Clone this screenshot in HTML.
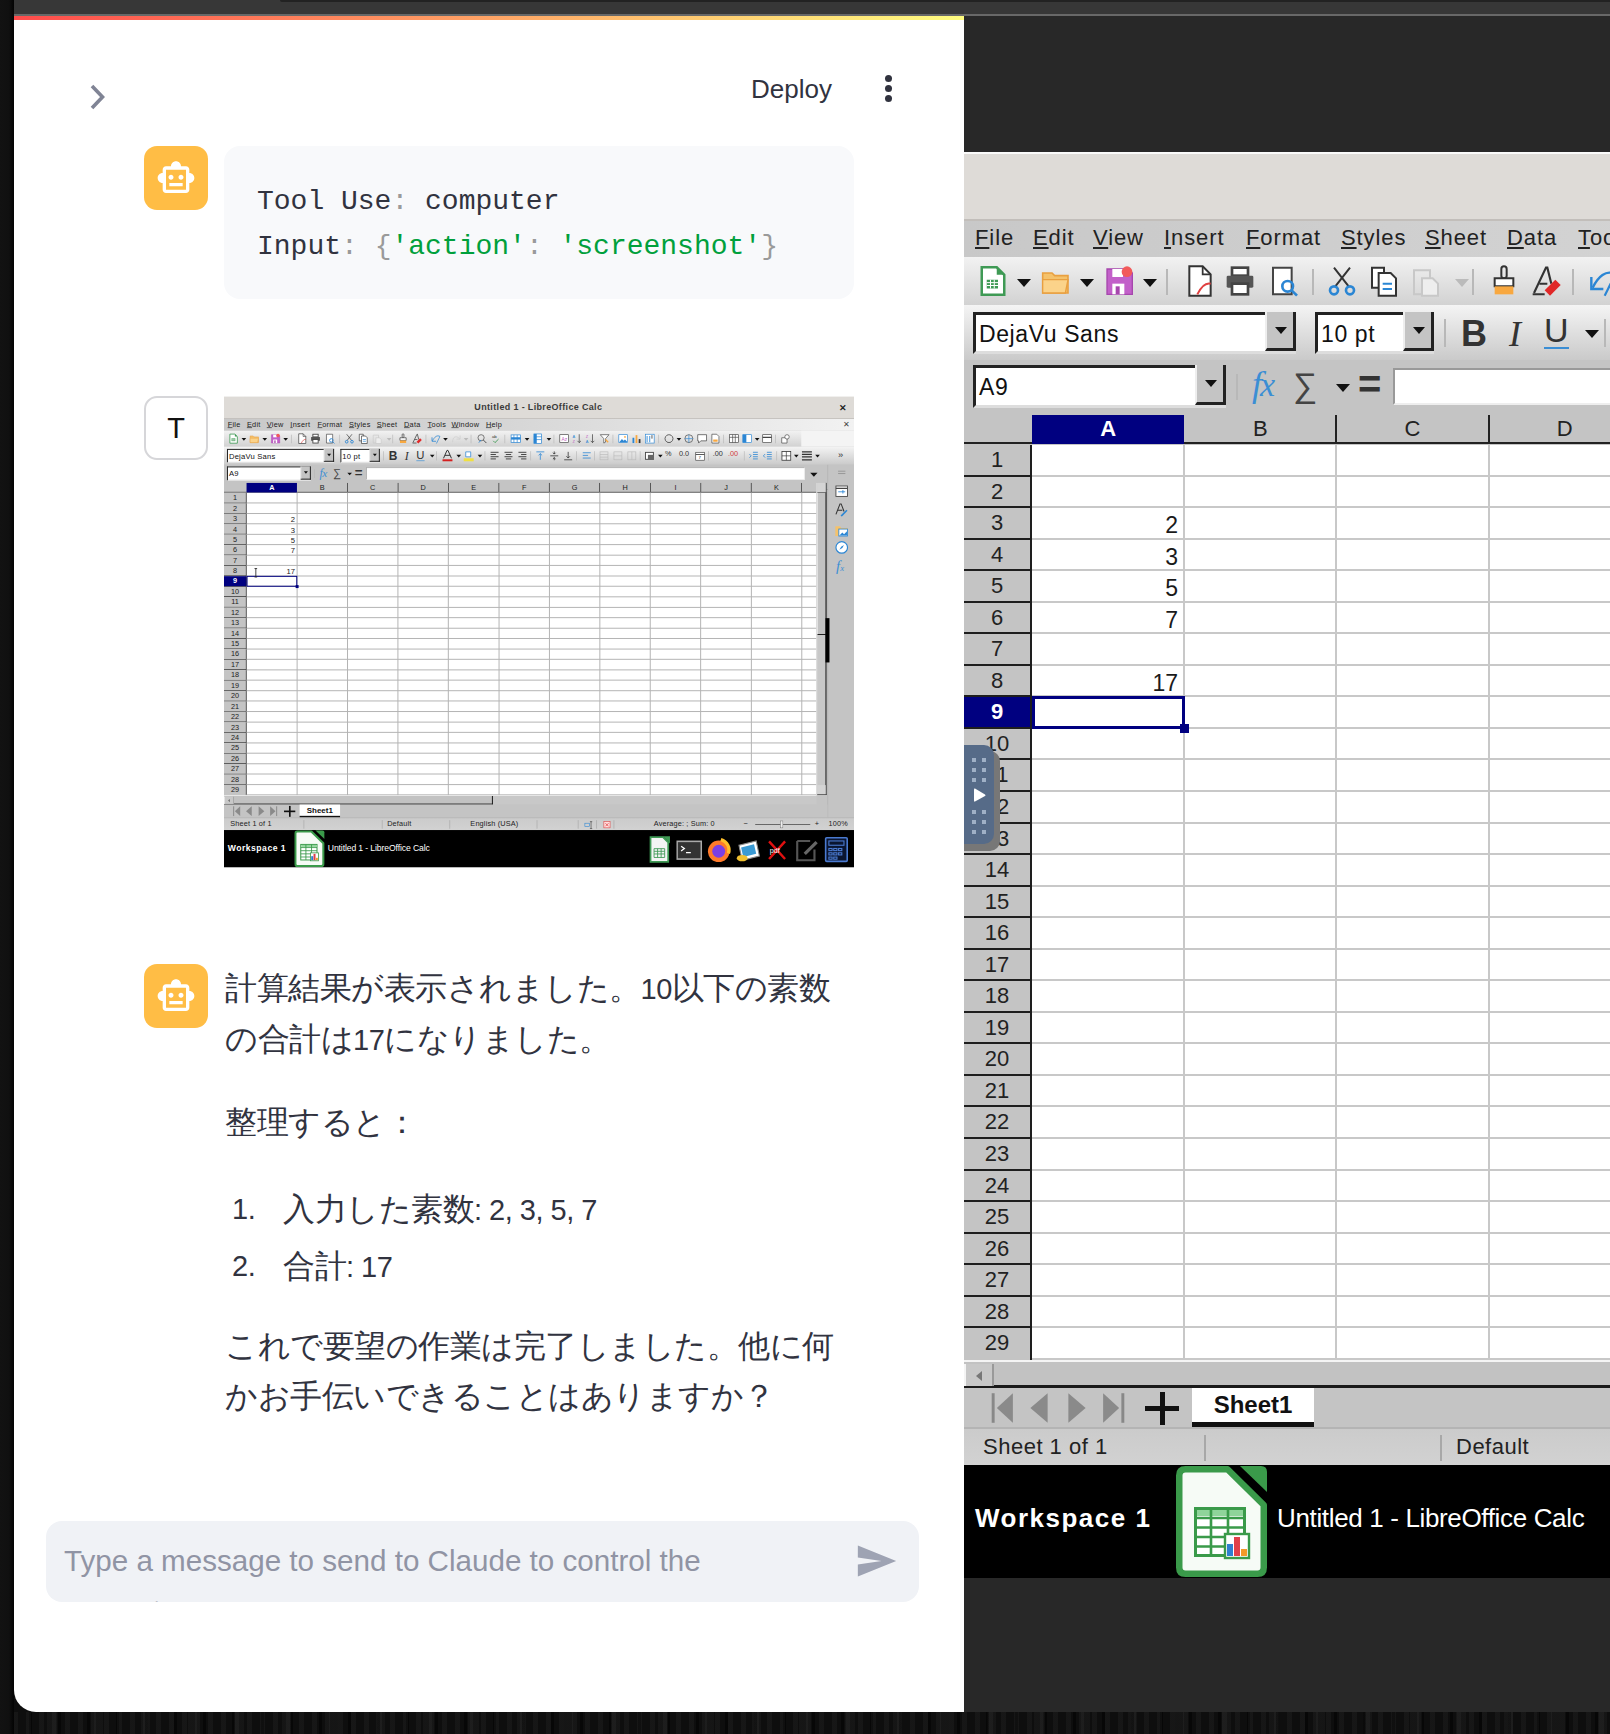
<!DOCTYPE html>
<html lang="ja"><head><meta charset="utf-8"><style>
*{box-sizing:border-box;margin:0;padding:0}
html,body{width:1610px;height:1734px;overflow:hidden;background:#0e0e0e;font-family:"Liberation Sans",sans-serif}
#page{position:relative;width:1610px;height:1734px;overflow:hidden;background:#0e0e0e}
.topbar{position:absolute;left:14px;top:0;width:1596px;height:14px;background:#373737}
.topdark{position:absolute;left:266px;top:0;right:0;height:2px;background:#222;border-radius:0 0 0 6px}
.topline{position:absolute;left:14px;top:14px;width:1596px;height:2px;background:#686868}
.rdark{position:absolute;left:964px;top:16px;width:646px;height:1695.5px;background:#282828}
.bottomtex{position:absolute;left:0;top:1711.5px;width:1610px;height:23px;background:#0e0e0e;background-image:repeating-linear-gradient(90deg,rgba(255,255,255,0.035) 0 5px,transparent 5px 13px),repeating-linear-gradient(90deg,rgba(0,0,0,0.5) 0 3px,transparent 3px 29px),repeating-linear-gradient(90deg,rgba(255,255,255,0.03) 0 9px,transparent 9px 47px)}
.panel{position:absolute;left:14px;top:16px;width:950px;height:1695.5px;background:#fff;border-radius:0 0 0 22px;overflow:hidden}
.deco{position:absolute;left:0;top:0;width:950px;height:4px;background:linear-gradient(90deg,#ff4b4b,#fffd80)}
.chev{position:absolute;left:74px;top:66.5px}
.deploy{position:absolute;left:737px;top:57px;font-size:26px;color:#31333f;line-height:32px}
.kebab{position:absolute;left:870.7px;top:58.5px;width:8px;height:30px}
.kebab i{display:block;position:absolute;left:0;width:7px;height:7px;border-radius:50%;background:#31333f}
.kebab i:nth-child(1){top:0}.kebab i:nth-child(2){top:10.2px}.kebab i:nth-child(3){top:20.4px}
.av{position:absolute;left:130px;width:64px;height:64px;border-radius:13px}
.av.bot{background:#ffbd45}
.av.bot svg{position:absolute;left:12px;top:12px}
.av.usr{border:2px solid #d6d6d9;background:#fff;font-size:29px;color:#111;text-align:center;line-height:60px}
.code{position:absolute;left:210px;top:130px;width:630px;height:153px;background:#f8f9fb;border-radius:16px;padding:33px 0 0 33px;font-family:"Liberation Mono",monospace;font-size:28px;color:#31333f}
.code .cl{height:45px;line-height:45px;white-space:pre}
.code .p{color:#9a9a9a}
.code .s{color:#00a03c}
.mini-wrap{position:absolute;left:210px;top:380.3px;width:630px;height:471.4px;overflow:hidden}
.mini-inner{position:absolute;left:0;top:0;width:1900px;height:1426px;transform-origin:0 0;transform:scale(0.331579,0.330575)}
.ibeam{position:absolute;left:90px;top:520px}
.msg{position:absolute;left:0;top:0}
.msg p{position:absolute;left:211px;font-size:32px;letter-spacing:-0.5px;line-height:50.4px;color:#31333f;white-space:nowrap}
.m1{top:947px}
.m2{top:1081px}
.m3{top:1304.5px}
.li{position:absolute;left:211px;font-size:32px;letter-spacing:-0.5px;line-height:50.4px;color:#31333f;white-space:nowrap}
.li .num{position:absolute;left:7px}
.li .lt{position:absolute;left:58px}
.chat{position:absolute;left:32px;top:1505px;width:873px;height:81px;background:#f0f2f6;border-radius:16px;overflow:hidden}
.ph{position:absolute;left:18px;top:15px;font-size:29.6px;line-height:50px;color:#9094a4;white-space:nowrap}
.send{position:absolute;left:810px;top:21px}

/* ---------- LibreOffice ---------- */
.lo-big-wrap{position:absolute;left:964px;top:152px;width:646px;height:1426px;overflow:hidden}
.lo{position:absolute;left:0;top:0;width:1900px;height:1426px;background:#c4c4c4;overflow:hidden;font-family:"Liberation Sans",sans-serif;color:#1e1e1e}
.lo .ic{position:absolute}
.lo-title{position:absolute;left:0;top:0;width:1900px;height:67px;background:#dedbd7;border-top:2px solid #fafafa}
.lo-tt{position:absolute;left:755px;top:16px;font-size:27px;font-weight:bold;color:#3a3a3a;letter-spacing:1.1px}
.lo-x{position:absolute;left:1854px;top:16px;font-size:28px;font-weight:bold;color:#222}
.lo-menu{position:absolute;left:0;top:67px;width:1900px;height:38px;border-top:2px solid #c2beba;background:linear-gradient(90deg,#c8c8c8 0%,#d6d6d6 45%,#f2f2f2 100%)}
.mi{position:absolute;top:3px;font-size:22px;line-height:28px;color:#222;letter-spacing:0.9px}
.mi::first-letter{text-decoration:underline;text-decoration-thickness:2px;text-underline-offset:2px}
.mclose{position:absolute;left:1868px;top:4px;font-size:24px;color:#444}
.lo-tb1{position:absolute;left:0;top:105px;width:1900px;height:48px;background:linear-gradient(180deg,#f2f2f2,#d2d2d2)}
.lo-tb1::after{content:"";position:absolute;left:1741px;top:0;right:0;bottom:0;background:#f4f4f4}
.lo-tb2{position:absolute;left:0;top:153px;width:1900px;height:55px;background:linear-gradient(180deg,#f4f4f4,#cacaca)}
.dd{position:absolute;width:0;height:0;border-left:7px solid transparent;border-right:7px solid transparent;border-top:8px solid #111;margin-left:1px}
.dd.dis{border-top-color:#bbb}
.sep{position:absolute;width:2px;background:#b8b8b8}
.combo{position:absolute;background:#fff;border:3px solid #222;border-right-width:2px;border-bottom-color:#ddd;border-right-color:#ddd;box-shadow:inset 0 0 0 0 #000}
.combo .ct{position:absolute;left:3px;top:5px;font-size:23px;letter-spacing:0.6px;line-height:28px;color:#111}
.combo .cbtn{position:absolute;right:-2px;top:-3px;width:31px;height:calc(100% + 3px);background:#c4c4c4;border-left:2px solid #eee;border-right:3px solid #222;border-bottom:3px solid #222}
.combo .cbtn::after{content:"";position:absolute;left:8px;top:15px;border-left:6px solid transparent;border-right:6px solid transparent;border-top:7px solid #111}
.tb-b{position:absolute;top:8px;font-size:36px;font-weight:bold;color:#333;font-family:"Liberation Sans",sans-serif}
.tb-i{position:absolute;top:8px;font-size:36px;font-style:italic;color:#333;font-family:"Liberation Serif",serif}
.tb-u{position:absolute;top:9px;font-size:34px;color:#333;border-bottom:2.5px solid #3b8ed4;line-height:33px}
.tb-t{position:absolute;top:10px;font-size:22px;color:#333}
.tb-t.red{color:#d04040}
.lo-fx{position:absolute;left:0;top:208px;width:1900px;height:55px;background:#c4c4c4}
.fxi{position:absolute;top:3px;font-size:36px;font-style:italic;color:#3b8ed4;font-family:"Liberation Serif",serif}
.sig{position:absolute;top:6px;font-size:34px;color:#444}
.eq{position:absolute;top:2px;font-size:40px;font-weight:bold;color:#333}
.fxin{position:absolute;left:429px;top:8px;width:1322px;height:37px;background:#fff;border:2px solid #999;border-right-color:#eee;border-bottom-color:#eee}
.fxdd{position:absolute;left:1768px;top:24px;border-left:11px solid transparent;border-right:11px solid transparent;border-top:12px solid #111}
.lo-colh{position:absolute;left:0;top:263px;width:1787px;height:29px;background:#c4c4c4;border-bottom:2px solid #222}
.ch{position:absolute;top:0;width:152.2px;height:27px;text-align:center;font-size:22px;line-height:28px;color:#222;border-right:2px solid #222;clip-path:inset(6px 0 0 0)}
.ch{clip-path:none}
.ch::after{content:"";position:absolute;right:-1px;top:0;width:2px;height:27px;background:#222}
.ch.sel::after{display:none}
.ch{border-right:none}
.ch.sel{background:#000080;color:#fff;font-weight:bold;height:29px}
.lo-grid{position:absolute;left:0;top:293px;width:1787px;height:915px;background:#fff}
.rh{position:absolute;left:0;width:68px;height:31.546px;background:#c4c4c4;border-bottom:2.3px solid #1e1e1e;border-right:2px solid #1e1e1e;text-align:center;font-size:22px;line-height:30px;color:#222}
.rh.sel{background:#000080;color:#fff;font-weight:bold}
.cv{position:absolute;left:68px;width:146px;height:31.546px;text-align:right;font-size:23px;line-height:34px;color:#1a1a1a}
.cursel{position:absolute;left:68px;width:153px;height:33px;border:3px solid #000080}
.cursel::after{content:"";position:absolute;right:-7px;bottom:-7px;width:9px;height:9px;background:#000080}
.lo-vs{position:absolute;left:1787px;top:263px;width:30px;height:944px;background:#c8c8c8;border-left:2px solid #e6e6e6;border-right:3px solid #111}
.vs-btn1{position:absolute;left:0;top:0;width:28px;height:30px;background:#d4d4d4;border-right:2px solid #333;border-bottom:2px solid #333}
.vs-btn2{position:absolute;left:0;bottom:0;width:28px;height:30px;background:#d4d4d4;border-right:2px solid #333;border-bottom:2px solid #333}
.vs-thumb{position:absolute;left:0;top:30px;width:28px;height:430px;background:#c2c2c2;border-right:3px solid #1a1a1a;border-bottom:3px solid #1a1a1a;border-left:2px solid #f0f0f0}
.lo-side{position:absolute;left:1820px;top:208px;width:80px;height:1067px;background:#c4c4c4;border-left:2px solid #b0b0b0}
.sb-menu{position:absolute;left:30px;top:18px;width:22px;height:10px;border-top:3px solid #999;border-bottom:3px solid #999}
.sb-fx{position:absolute;left:24px;top:280px;font-size:44px;font-style:italic;color:#3b8ed4;font-family:"Liberation Serif",serif}
.sb-handle{position:absolute;left:1814px;top:672px;width:12px;height:134px;background:#000}
.lo-hs{position:absolute;left:0;top:1208px;width:1787px;height:28px;background:#c8c8c8;border-top:2px solid #f4f4f4}
.hs-btn{position:absolute;left:0;top:2px;width:30px;height:22px;background:#c8c8c8;border-left:2px solid #f4f4f4;border-right:2px solid #999;z-index:1}
.hs-btn::after{content:"";position:absolute;left:10px;top:7px;border-top:5px solid transparent;border-bottom:5px solid transparent;border-right:6px solid #777}
.hs-thumb{position:absolute;left:0;top:0;width:811px;height:26px;background:#c2c2c2;border-right:3px solid #1a1a1a;border-bottom:3px solid #1a1a1a}
.lo-tabs{position:absolute;left:0;top:1236px;width:1820px;height:39px;background:#c4c4c4}
.tab-plus{position:absolute;left:181px;top:4px;width:34px;height:34px}
.tab-plus::before{content:"";position:absolute;left:0;top:14px;width:34px;height:5px;background:#111}
.tab-plus::after{content:"";position:absolute;left:14.5px;top:0;width:5px;height:33px;background:#111}
.tab{position:absolute;left:228px;top:0;width:122px;height:39px;background:#fff;border-bottom:5px solid #111;text-align:center}
.tab span{font-size:24px;font-weight:bold;line-height:34px;color:#111}
.lo-status{position:absolute;left:0;top:1275px;width:1900px;height:38px;background:linear-gradient(180deg,#cbcbcb,#d2d2d2);border-top:2px solid #b4b4b4}
.st{position:absolute;top:4px;font-size:22px;line-height:28px;color:#222;white-space:nowrap;letter-spacing:0.5px}
.ssep{position:absolute;top:6px;width:2px;height:26px;background:#a8a8a8}
.zline{position:absolute;left:1602px;top:18px;width:166px;height:2px;background:#333}
.zknob{position:absolute;left:1678px;top:8px;width:8px;height:22px;background:#eee;border:1px solid #444}
.lo-task{position:absolute;left:0;top:1313px;width:1900px;height:113px;background:#000}
.ws{position:absolute;left:11px;top:38px;font-size:26px;font-weight:bold;color:#fff;letter-spacing:1.5px;font-family:"Liberation Sans",sans-serif}
.calc-big{position:absolute;left:212px;top:0;width:92px;height:113px}
.tt{position:absolute;left:313px;top:38px;font-size:26px;color:#fff;white-space:nowrap;letter-spacing:-0.35px}

/* streamlit handle overlay */
.handle{position:absolute;left:0;top:593px;width:36px;height:106px}
.hshadow{position:absolute;left:0;top:6px;width:36px;height:100px;background:#777;border-radius:0 10px 10px 0}
.hbody{position:absolute;left:0;top:0;width:30px;height:99px;background:#566b88;border-radius:0 10px 10px 0}
.dots{position:absolute;left:5px;width:20px;height:30px;background-image:linear-gradient(#9fb0c6,#9fb0c6);background-size:4px 4px;background-repeat:no-repeat}
.dots.d1{top:13px;background-image:linear-gradient(#9fb0c6,#9fb0c6),linear-gradient(#9fb0c6,#9fb0c6),linear-gradient(#9fb0c6,#9fb0c6),linear-gradient(#9fb0c6,#9fb0c6),linear-gradient(#9fb0c6,#9fb0c6),linear-gradient(#9fb0c6,#9fb0c6);background-position:3px 0,13px 0,3px 10px,13px 10px,3px 20px,13px 20px}
.dots.d2{top:65px;background-image:linear-gradient(#9fb0c6,#9fb0c6),linear-gradient(#9fb0c6,#9fb0c6),linear-gradient(#9fb0c6,#9fb0c6),linear-gradient(#9fb0c6,#9fb0c6),linear-gradient(#9fb0c6,#9fb0c6),linear-gradient(#9fb0c6,#9fb0c6);background-position:3px 0,13px 0,3px 10px,13px 10px,3px 20px,13px 20px}
.play{position:absolute;left:9px;top:42px}
.a{font-size:29px}

.rh.last{border-bottom:none}
.lstrip{position:absolute;left:0;top:0;width:14px;height:1734px;background:linear-gradient(90deg,#121212 0,#101010 9px,#080808 12px,#030303 14px)}

.hl{position:absolute;left:68px;right:0;height:2px;background:#c8c8c8}
.vl{position:absolute;top:0;bottom:0;width:2px;background:#c8c8c8}
.lo.mini .hl{height:3px;margin-top:-0.5px;background:#b4b4b4}
.lo.mini .vl{width:3px;margin-left:-0.5px;background:#b4b4b4}

</style></head>
<body>
<div id="page">
  <div class="topbar"><div class="topdark"></div></div>
  <div class="topline"></div>
  <div class="rdark"></div>
  <div class="bottomtex"></div>
  <div class="lstrip"></div>
  <div class="lo-big-wrap"><div class="lo">
<div class="lo-title"><span class="lo-tt">Untitled 1 - LibreOffice Calc</span><span class="lo-x">&#x2715;</span></div>
<div class="lo-menu">
<span class="mi" style="left:11px">File</span>
<span class="mi" style="left:69px">Edit</span>
<span class="mi" style="left:129px">View</span>
<span class="mi" style="left:200px">Insert</span>
<span class="mi" style="left:282px">Format</span>
<span class="mi" style="left:377px">Styles</span>
<span class="mi" style="left:461px">Sheet</span>
<span class="mi" style="left:543px">Data</span>
<span class="mi" style="left:614px">Tools</span>
<span class="mi" style="left:686px">Window</span>
<span class="mi" style="left:790px">Help</span>
<span class="mclose">&#x2715;</span>
</div>
<div class="lo-tb1">
<svg class="ic" style="left:14px;top:7px" width="30" height="34" viewBox="0 0 24 24"><path d="M3 1h12l6 6v16H3z" fill="#fff" stroke="#3f9a55" stroke-width="2"/><path d="M15 1l6 6h-6z" fill="#3f9a55"/><rect x="7" y="11" width="9" height="7" fill="#3f9a55"/><path d="M7 13.3h9M7 15.6h9M10 11v7M13 11v7" stroke="#fff" stroke-width=".8"/></svg><div class="dd" style="left:52px;top:22px"></div><svg class="ic" style="left:76px;top:7px" width="32" height="34" viewBox="0 0 24 24"><path d="M2 6h7l2 2h10v13H2z" fill="#f5c26b" stroke="#e9a040" stroke-width="1.2"/><path d="M2 11h19l-2 10H2z" fill="#fbd38a" stroke="#e9a040" stroke-width="1"/></svg><div class="dd" style="left:115px;top:22px"></div><svg class="ic" style="left:139px;top:7px" width="32" height="34" viewBox="0 0 24 24"><path d="M3 3h16l3 3v16H3z" fill="#c260c9" stroke="#a646ad" stroke-width="1"/><rect x="7" y="3" width="8" height="6" fill="#fff"/><rect x="7" y="14" width="9" height="8" fill="#fff"/><rect x="9.5" y="16" width="3" height="6" fill="#a646ad"/><circle cx="18" cy="5" r="4" fill="#f25a5a"/></svg><div class="dd" style="left:178px;top:22px"></div><div class="sep" style="left:202px;top:12px;height:26px"></div><svg class="ic" style="left:220px;top:7px" width="32" height="34" viewBox="0 0 24 24"><path d="M4 1h10l6 6v16H4z" fill="#fff" stroke="#333" stroke-width="1.5"/><path d="M14 1v6h6" fill="none" stroke="#333" stroke-width="1.3"/><path d="M10 22c3-6 6-9 10-8" stroke="#e04040" stroke-width="1.5" fill="none"/></svg><svg class="ic" style="left:260px;top:7px" width="32" height="34" viewBox="0 0 24 24"><rect x="6" y="2" width="12" height="6" fill="#fff" stroke="#444" stroke-width="2"/><rect x="2" y="8" width="20" height="9" rx="1" fill="#555"/><rect x="6" y="14" width="12" height="8" fill="#fff" stroke="#444" stroke-width="2"/></svg><svg class="ic" style="left:305px;top:7px" width="32" height="34" viewBox="0 0 24 24"><path d="M3 2h14v20H3z" fill="#fff" stroke="#444" stroke-width="1.5"/><circle cx="14" cy="16" r="4" fill="none" stroke="#2b86d4" stroke-width="2"/><path d="M17 19l4 4" stroke="#2b86d4" stroke-width="2"/></svg><div class="sep" style="left:348px;top:12px;height:26px"></div><svg class="ic" style="left:362px;top:7px" width="32" height="34" viewBox="0 0 24 24"><path d="M6 2l11 14M18 2L7 16" stroke="#333" stroke-width="1.5"/><circle cx="6" cy="19" r="3" fill="none" stroke="#2b86d4" stroke-width="2"/><circle cx="18" cy="19" r="3" fill="none" stroke="#2b86d4" stroke-width="2"/></svg><svg class="ic" style="left:404px;top:7px" width="32" height="34" viewBox="0 0 24 24"><path d="M3 2h9v15H3z" fill="#fff" stroke="#333" stroke-width="1.5"/><path d="M8 6h9l4 4v13H8z" fill="#fff" stroke="#333" stroke-width="1.5"/><path d="M11 14h7M11 18h7" stroke="#2b86d4" stroke-width="1.5"/></svg><svg class="ic" style="left:446px;top:7px" width="32" height="34" viewBox="0 0 24 24"><path d="M3 4h12v18H3z" fill="none" stroke="#c8c8c8" stroke-width="1.5"/><path d="M9 10h8l4 4v9H9z" fill="#eee" stroke="#c8c8c8" stroke-width="1.5"/></svg><div class="dd dis" style="left:490px;top:22px"></div><div class="sep" style="left:508px;top:12px;height:26px"></div><svg class="ic" style="left:524px;top:7px" width="32" height="34" viewBox="0 0 24 24"><rect x="10" y="1" width="4" height="9" rx="2" fill="none" stroke="#333" stroke-width="1.5"/><path d="M5 10h14v6H5z" fill="#fff" stroke="#333" stroke-width="1.5"/><path d="M5 16h14v6H5z" fill="#f8a840"/></svg><svg class="ic" style="left:566px;top:7px" width="32" height="34" viewBox="0 0 24 24"><path d="M3 21L12 2h1l3 12" fill="none" stroke="#333" stroke-width="1.6"/><path d="M7 14h6M2 22h9" stroke="#333" stroke-width="1.5"/><path d="M11 19l8-8 4 4-8 8z" fill="#e02828"/></svg><div class="sep" style="left:608px;top:12px;height:26px"></div><svg class="ic" style="left:622px;top:7px" width="32" height="34" viewBox="0 0 24 24"><path d="M5 17C9 9 15 3 22 7" fill="none" stroke="#2b86d4" stroke-width="1.8"/><path d="M4 9v9h9" fill="none" stroke="#2b86d4" stroke-width="1.8"/><path d="M22 7l-8 16" stroke="#2b86d4" stroke-width="1.6"/></svg><div class="dd" style="left:660px;top:22px"></div><svg class="ic" style="left:684px;top:7px" width="32" height="34" viewBox="0 0 24 24"><path d="M4 20C4 8 12 4 20 12" fill="none" stroke="#cfcfcf" stroke-width="1.8"/><path d="M21 5v8h-8" fill="none" stroke="#cfcfcf" stroke-width="1.8"/></svg><div class="dd dis" style="left:722px;top:22px"></div><div class="sep" style="left:744px;top:12px;height:26px"></div><svg class="ic" style="left:762px;top:7px" width="32" height="34" viewBox="0 0 24 24"><circle cx="10" cy="10" r="7" fill="none" stroke="#444" stroke-width="1.5"/><path d="M15 15l7 7" stroke="#444" stroke-width="2"/><path d="M5 21l5-6" stroke="#2b86d4" stroke-width="2"/></svg><svg class="ic" style="left:804px;top:7px" width="32" height="34" viewBox="0 0 24 24"><text x="3" y="11" font-size="10" font-family="Liberation Sans" fill="#333">ab</text><path d="M6 17l4 4 8-8" fill="none" stroke="#3f9a55" stroke-width="2"/></svg><div class="sep" style="left:846px;top:12px;height:26px"></div><svg class="ic" style="left:862px;top:7px" width="36" height="34" viewBox="0 0 24 24"><rect x="2" y="4" width="20" height="16" fill="#fff" stroke="#2b86d4" stroke-width="1.5"/><rect x="2" y="9" width="20" height="5" fill="#2b86d4"/><path d="M8 4v16M15 4v16" stroke="#2b86d4" stroke-width="1.5"/></svg><div class="dd" style="left:906px;top:22px"></div><svg class="ic" style="left:928px;top:7px" width="36" height="34" viewBox="0 0 24 24"><rect x="4" y="2" width="16" height="20" fill="#fff" stroke="#2b86d4" stroke-width="1.5"/><rect x="4" y="2" width="6" height="20" fill="#2b86d4"/><path d="M4 8h16M4 14h16" stroke="#2b86d4" stroke-width="1.5"/></svg><div class="dd" style="left:972px;top:22px"></div><div class="sep" style="left:994px;top:12px;height:26px"></div><svg class="ic" style="left:1010px;top:7px" width="32" height="34" viewBox="0 0 24 24"><rect x="2" y="3" width="20" height="18" fill="#fff" stroke="#444" stroke-width="1.5"/><text x="6" y="18" font-size="11" fill="#c060c0" font-family="Liberation Sans">Az</text></svg><svg class="ic" style="left:1050px;top:7px" width="32" height="34" viewBox="0 0 24 24"><text x="1" y="10" font-size="9" fill="#2b86d4" font-family="Liberation Sans">A</text><text x="1" y="21" font-size="9" fill="#c060c0" font-family="Liberation Sans">Z</text><path d="M16 2v19M12 17l4 4 4-4" fill="none" stroke="#333" stroke-width="1.5"/></svg><svg class="ic" style="left:1090px;top:7px" width="32" height="34" viewBox="0 0 24 24"><text x="1" y="10" font-size="9" fill="#c060c0" font-family="Liberation Sans">Z</text><text x="1" y="21" font-size="9" fill="#2b86d4" font-family="Liberation Sans">A</text><path d="M16 2v19M12 17l4 4 4-4" fill="none" stroke="#333" stroke-width="1.5"/></svg><svg class="ic" style="left:1132px;top:7px" width="32" height="34" viewBox="0 0 24 24"><path d="M2 3h20l-8 9v8l-4 2V12z" fill="#fff" stroke="#444" stroke-width="1.5"/><path d="M14 14l6 6" stroke="#f8a840" stroke-width="3"/></svg><div class="sep" style="left:1172px;top:12px;height:26px"></div><svg class="ic" style="left:1188px;top:7px" width="32" height="34" viewBox="0 0 24 24"><rect x="2" y="3" width="20" height="18" fill="#fff" stroke="#2b86d4" stroke-width="1.5"/><path d="M3 20l6-7 4 4 3-3 6 6z" fill="#2b86d4"/><circle cx="16" cy="8" r="2" fill="#f8a840"/></svg><svg class="ic" style="left:1228px;top:7px" width="32" height="34" viewBox="0 0 24 24"><rect x="3" y="10" width="4" height="12" fill="#2b86d4"/><rect x="10" y="4" width="4" height="18" fill="#f8a840"/><rect x="17" y="13" width="4" height="9" fill="#333"/></svg><svg class="ic" style="left:1268px;top:7px" width="32" height="34" viewBox="0 0 24 24"><rect x="2" y="2" width="20" height="20" fill="#fff" stroke="#2b86d4" stroke-width="1.5"/><path d="M6 6v14M12 6v14" stroke="#2b86d4" stroke-width="2"/><path d="M17 4v8" stroke="#444" stroke-width="2"/></svg><div class="sep" style="left:1310px;top:12px;height:26px"></div><svg class="ic" style="left:1326px;top:7px" width="32" height="34" viewBox="0 0 24 24"><path d="M12 3a9 9 0 1 0 .1 0" fill="none" stroke="#444" stroke-width="1.8"/></svg><div class="dd" style="left:1364px;top:22px"></div><svg class="ic" style="left:1386px;top:7px" width="32" height="34" viewBox="0 0 24 24"><circle cx="12" cy="12" r="9" fill="none" stroke="#444" stroke-width="1.5"/><path d="M3 12h18M12 3v18" stroke="#2b86d4" stroke-width="1.5"/></svg><svg class="ic" style="left:1426px;top:7px" width="32" height="34" viewBox="0 0 24 24"><path d="M2 3h20v14H9l-5 5v-5H2z" fill="#fff" stroke="#444" stroke-width="1.6"/></svg><svg class="ic" style="left:1466px;top:7px" width="32" height="34" viewBox="0 0 24 24"><path d="M4 2h11l5 5v15H4z" fill="#fff" stroke="#444" stroke-width="1.5"/><rect x="7" y="14" width="10" height="5" fill="#f8a840"/></svg><div class="sep" style="left:1506px;top:12px;height:26px"></div><svg class="ic" style="left:1522px;top:7px" width="32" height="34" viewBox="0 0 24 24"><rect x="2" y="3" width="20" height="18" fill="#fff" stroke="#444" stroke-width="1.5"/><path d="M2 9h20M9 3v18M15 3v18" stroke="#444" stroke-width="1.5"/></svg><svg class="ic" style="left:1562px;top:7px" width="32" height="34" viewBox="0 0 24 24"><rect x="2" y="3" width="20" height="18" fill="#fff" stroke="#2b86d4" stroke-width="1.5"/><rect x="2" y="3" width="8" height="18" fill="#2b86d4"/></svg><div class="dd" style="left:1600px;top:22px"></div><svg class="ic" style="left:1622px;top:7px" width="32" height="34" viewBox="0 0 24 24"><rect x="2" y="3" width="20" height="18" fill="#fff" stroke="#444" stroke-width="1.5"/><path d="M2 9h20" stroke="#444" stroke-width="3"/></svg><div class="sep" style="left:1662px;top:12px;height:26px"></div><svg class="ic" style="left:1678px;top:7px" width="32" height="34" viewBox="0 0 24 24"><path d="M3 10h12v12H3z" fill="#fff" stroke="#444" stroke-width="1.5"/><circle cx="15" cy="8" r="5" fill="#fff" stroke="#444" stroke-width="1.5"/></svg>
</div>
<div class="lo-tb2">
<div class="combo" style="left:9px;top:7px;width:323px;height:42px"><span class="ct">DejaVu Sans</span><div class="cbtn"></div></div><div class="combo" style="left:351px;top:7px;width:119px;height:42px"><span class="ct">10 pt</span><div class="cbtn"></div></div><div class="sep" style="left:480px;top:14px;height:28px"></div><span class="tb-b" style="left:497px">B</span><span class="tb-i" style="left:545px">I</span><span class="tb-u" style="left:580px">U</span><div class="dd" style="left:620px;top:25px"></div><div class="sep" style="left:640px;top:14px;height:28px"></div><svg class="ic" style="left:656px;top:8px" width="36" height="40" viewBox="0 0 24 24"><path d="M4 17L11 1h2l7 16M7 11h10" fill="none" stroke="#333" stroke-width="2"/><rect x="2" y="19" width="20" height="4" fill="#d42020"/></svg><div class="dd" style="left:700px;top:25px"></div><svg class="ic" style="left:720px;top:8px" width="36" height="40" viewBox="0 0 24 24"><path d="M6 4h10v10H6z" fill="#fff" stroke="#2b86d4" stroke-width="1.5"/><rect x="2" y="17" width="20" height="6" fill="#f0e040"/></svg><div class="dd" style="left:764px;top:25px"></div><div class="sep" style="left:786px;top:14px;height:28px"></div><svg class="ic" style="left:800px;top:10px" width="32" height="36" viewBox="0 0 24 24"><path d="M3 4h18M3 9h12M3 14h18M3 19h12" stroke="#333" stroke-width="2"/></svg><svg class="ic" style="left:842px;top:10px" width="32" height="36" viewBox="0 0 24 24"><path d="M3 4h18M6 9h12M3 14h18M6 19h12" stroke="#333" stroke-width="2"/></svg><svg class="ic" style="left:884px;top:10px" width="32" height="36" viewBox="0 0 24 24"><path d="M3 4h18M9 9h12M3 14h18M9 19h12" stroke="#333" stroke-width="2"/></svg><div class="sep" style="left:924px;top:14px;height:28px"></div><svg class="ic" style="left:938px;top:10px" width="32" height="36" viewBox="0 0 24 24"><path d="M3 3h18M12 7v14M8 11l4-4 4 4" fill="none" stroke="#2b86d4" stroke-width="1.8"/></svg><svg class="ic" style="left:980px;top:10px" width="32" height="36" viewBox="0 0 24 24"><path d="M3 12h18M12 2v6M12 16v6M9 5l3 3 3-3M9 19l3-3 3 3" fill="none" stroke="#333" stroke-width="1.8"/></svg><svg class="ic" style="left:1022px;top:10px" width="32" height="36" viewBox="0 0 24 24"><path d="M3 21h18M12 3v14M8 13l4 4 4-4" fill="none" stroke="#333" stroke-width="1.8"/></svg><div class="sep" style="left:1062px;top:14px;height:28px"></div><svg class="ic" style="left:1078px;top:10px" width="32" height="36" viewBox="0 0 24 24"><path d="M3 5h18M3 11h12M3 17h18" stroke="#2b86d4" stroke-width="1.8"/></svg><div class="sep" style="left:1116px;top:14px;height:28px"></div><svg class="ic" style="left:1130px;top:10px" width="32" height="36" viewBox="0 0 24 24"><rect x="3" y="3" width="18" height="18" fill="none" stroke="#bbb" stroke-width="1.5"/><path d="M3 9h18M3 15h18" stroke="#bbb" stroke-width="1.5"/></svg><svg class="ic" style="left:1172px;top:10px" width="32" height="36" viewBox="0 0 24 24"><rect x="3" y="3" width="18" height="18" fill="none" stroke="#bbb" stroke-width="1.5"/><path d="M3 12h18" stroke="#bbb" stroke-width="1.5"/></svg><svg class="ic" style="left:1214px;top:10px" width="32" height="36" viewBox="0 0 24 24"><rect x="3" y="3" width="18" height="18" fill="none" stroke="#bbb" stroke-width="1.5"/><path d="M12 3v18" stroke="#bbb" stroke-width="1.5"/></svg><div class="sep" style="left:1254px;top:14px;height:28px"></div><svg class="ic" style="left:1268px;top:10px" width="36" height="36" viewBox="0 0 24 24"><rect x="2" y="5" width="16" height="14" fill="#fff" stroke="#444" stroke-width="1.8"/><rect x="7" y="10" width="12" height="10" fill="#666"/></svg><div class="dd" style="left:1308px;top:25px"></div><span class="tb-t" style="left:1330px">%</span><span class="tb-t" style="left:1372px">0.0</span><svg class="ic" style="left:1420px;top:10px" width="32" height="36" viewBox="0 0 24 24"><rect x="2" y="4" width="20" height="18" fill="#fff" stroke="#444" stroke-width="1.5"/><path d="M2 9h20" stroke="#444" stroke-width="2"/><text x="8" y="20" font-size="10" fill="#333">7</text></svg><div class="sep" style="left:1460px;top:14px;height:28px"></div><span class="tb-t" style="left:1474px">.00</span><span class="tb-t red" style="left:1520px">.00</span><div class="sep" style="left:1568px;top:14px;height:28px"></div><svg class="ic" style="left:1582px;top:10px" width="32" height="36" viewBox="0 0 24 24"><path d="M10 4h11M10 9h11M10 14h11M10 19h11M2 8l4 4-4 4" fill="none" stroke="#2b86d4" stroke-width="1.8"/></svg><svg class="ic" style="left:1624px;top:10px" width="32" height="36" viewBox="0 0 24 24"><path d="M10 4h11M10 9h11M10 14h11M10 19h11M6 8l-4 4 4 4" fill="none" stroke="#2b86d4" stroke-width="1.8"/></svg><div class="sep" style="left:1666px;top:14px;height:28px"></div><svg class="ic" style="left:1680px;top:10px" width="32" height="36" viewBox="0 0 24 24"><rect x="2" y="2" width="20" height="20" fill="#fff" stroke="#333" stroke-width="1.8"/><path d="M12 2v20M2 12h20" stroke="#333" stroke-width="1.5"/></svg><div class="dd" style="left:1718px;top:25px"></div><svg class="ic" style="left:1740px;top:10px" width="36" height="36" viewBox="0 0 24 24"><path d="M2 4h20M2 9h20M2 14h20M2 20h20" stroke="#333" stroke-width="2.5"/></svg><div class="dd" style="left:1782px;top:25px"></div><span class="tb-t" style="left:1852px;font-size:28px">&#xBB;</span>
</div>
<div class="lo-fx">
<div class="combo" style="left:9px;top:5px;width:253px;height:43px"><span class="ct">A9</span><div class="cbtn"></div></div><div class="sep" style="left:272px;top:14px;height:26px"></div><span class="fxi" style="left:288px">f<span style="font-size:34px;margin-left:-2px">x</span></span><span class="sig" style="left:329px">&#x2211;</span><div class="dd" style="left:371px;top:24px"></div><span class="eq" style="left:394px">=</span><div class="fxin"></div><div class="fxdd"></div>
</div>
<div class="lo-colh">
<div class="ch sel" style="left:68.0px">A</div>
<div class="ch" style="left:220.2px">B</div>
<div class="ch" style="left:372.4px">C</div>
<div class="ch" style="left:524.6px">D</div>
<div class="ch" style="left:676.8px">E</div>
<div class="ch" style="left:829.0px">F</div>
<div class="ch" style="left:981.2px">G</div>
<div class="ch" style="left:1133.4px">H</div>
<div class="ch" style="left:1285.6px">I</div>
<div class="ch" style="left:1437.8px">J</div>
<div class="ch" style="left:1590.0px">K</div>
<div class="ch" style="left:1742.2px">L</div>
</div>
<div class="lo-grid">
<div class="rh" style="top:0.00px">1</div>
<div class="rh" style="top:31.55px">2</div>
<div class="rh" style="top:63.09px">3</div>
<div class="rh" style="top:94.64px">4</div>
<div class="rh" style="top:126.18px">5</div>
<div class="rh" style="top:157.73px">6</div>
<div class="rh" style="top:189.28px">7</div>
<div class="rh" style="top:220.82px">8</div>
<div class="rh sel" style="top:252.37px">9</div>
<div class="rh" style="top:283.91px">10</div>
<div class="rh" style="top:315.46px">11</div>
<div class="rh" style="top:347.01px">12</div>
<div class="rh" style="top:378.55px">13</div>
<div class="rh" style="top:410.10px">14</div>
<div class="rh" style="top:441.64px">15</div>
<div class="rh" style="top:473.19px">16</div>
<div class="rh" style="top:504.74px">17</div>
<div class="rh" style="top:536.28px">18</div>
<div class="rh" style="top:567.83px">19</div>
<div class="rh" style="top:599.37px">20</div>
<div class="rh" style="top:630.92px">21</div>
<div class="rh" style="top:662.47px">22</div>
<div class="rh" style="top:694.01px">23</div>
<div class="rh" style="top:725.56px">24</div>
<div class="rh" style="top:757.10px">25</div>
<div class="rh" style="top:788.65px">26</div>
<div class="rh" style="top:820.20px">27</div>
<div class="rh" style="top:851.74px">28</div>
<div class="rh last" style="top:883.29px">29</div>
<div class="hl" style="top:29.55px"></div>
<div class="hl" style="top:61.09px"></div>
<div class="hl" style="top:92.64px"></div>
<div class="hl" style="top:124.18px"></div>
<div class="hl" style="top:155.73px"></div>
<div class="hl" style="top:187.28px"></div>
<div class="hl" style="top:218.82px"></div>
<div class="hl" style="top:250.37px"></div>
<div class="hl" style="top:281.91px"></div>
<div class="hl" style="top:313.46px"></div>
<div class="hl" style="top:345.01px"></div>
<div class="hl" style="top:376.55px"></div>
<div class="hl" style="top:408.10px"></div>
<div class="hl" style="top:439.64px"></div>
<div class="hl" style="top:471.19px"></div>
<div class="hl" style="top:502.74px"></div>
<div class="hl" style="top:534.28px"></div>
<div class="hl" style="top:565.83px"></div>
<div class="hl" style="top:597.37px"></div>
<div class="hl" style="top:628.92px"></div>
<div class="hl" style="top:660.47px"></div>
<div class="hl" style="top:692.01px"></div>
<div class="hl" style="top:723.56px"></div>
<div class="hl" style="top:755.10px"></div>
<div class="hl" style="top:786.65px"></div>
<div class="hl" style="top:818.20px"></div>
<div class="hl" style="top:849.74px"></div>
<div class="hl" style="top:881.29px"></div>
<div class="hl" style="top:912.83px"></div>
<div class="vl" style="left:219.2px"></div>
<div class="vl" style="left:371.4px"></div>
<div class="vl" style="left:523.6px"></div>
<div class="vl" style="left:675.8px"></div>
<div class="vl" style="left:828.0px"></div>
<div class="vl" style="left:980.2px"></div>
<div class="vl" style="left:1132.4px"></div>
<div class="vl" style="left:1284.6px"></div>
<div class="vl" style="left:1436.8px"></div>
<div class="vl" style="left:1589.0px"></div>
<div class="vl" style="left:1741.2px"></div>
<div class="cv" style="top:63.09px">2</div>
<div class="cv" style="top:94.64px">3</div>
<div class="cv" style="top:126.18px">5</div>
<div class="cv" style="top:157.73px">7</div>
<div class="cv" style="top:220.82px">17</div>
<div class="cursel" style="top:251.37px"></div>
</div>
<div class="lo-vs"><div class="vs-btn1"></div><div class="vs-thumb"></div><div class="vs-btn2"></div></div><div class="lo-side"><div class="sb-menu"></div><svg class="ic" style="left:20px;top:59px" width="42" height="42" viewBox="0 0 24 24"><rect x="2" y="3" width="20" height="18" fill="#fff" stroke="#444" stroke-width="1.5"/><path d="M2 7h20" stroke="#444" stroke-width="2"/><path d="M6 13h12M14 10v6" stroke="#2b86d4" stroke-width="1.5"/></svg><svg class="ic" style="left:20px;top:115px" width="42" height="42" viewBox="0 0 24 24"><path d="M2 20L9 2h2l5 13M5 13h8" fill="none" stroke="#333" stroke-width="1.8"/><path d="M10 22l10-10 2 2-10 10z" fill="#2b86d4"/></svg><svg class="ic" style="left:20px;top:177px" width="42" height="42" viewBox="0 0 24 24"><path d="M1 5h8l2 3h11v14H1z" fill="#f5c26b"/><rect x="7" y="10" width="15" height="12" fill="#fff" stroke="#2b86d4" stroke-width="1.5"/><path d="M8 21l5-5 3 3 5-5v7z" fill="#2b86d4"/></svg><svg class="ic" style="left:20px;top:229px" width="42" height="42" viewBox="0 0 24 24"><circle cx="12" cy="12" r="10" fill="#fff" stroke="#2b86d4" stroke-width="2"/><path d="M16 8l-3 5-5 3 3-5z" fill="#2b86d4"/></svg><span class="sb-fx">f<span style="font-size:26px">x</span></span></div><div class="sb-handle"></div>
<div class="lo-hs"><div class="hs-btn"></div><div class="hs-thumb"></div></div>
<div class="lo-tabs"><svg class="ic" style="left:24px;top:4px" width="30" height="32" viewBox="0 0 24 26"><path d="M4 1v24" stroke="#888" stroke-width="2.4"/><path d="M20 1L7 13l13 12z" fill="#8a8a8a"/></svg><svg class="ic" style="left:60px;top:4px" width="30" height="32" viewBox="0 0 24 26"><path d="M19 1L5 13l14 12z" fill="#8a8a8a"/></svg><svg class="ic" style="left:98px;top:4px" width="30" height="32" viewBox="0 0 24 26"><path d="M5 1l14 12L5 25z" fill="#8a8a8a"/></svg><svg class="ic" style="left:134px;top:4px" width="30" height="32" viewBox="0 0 24 26"><path d="M20 1v24" stroke="#888" stroke-width="2.4"/><path d="M4 1l13 12L4 25z" fill="#8a8a8a"/></svg><div class="tab-plus"></div><div class="tab"><span>Sheet1</span></div></div>
<div class="lo-status"><span class="st" style="left:19px">Sheet 1 of 1</span><div class="ssep" style="left:240px"></div><div class="ssep" style="left:476px"></div><span class="st" style="left:492px">Default</span><div class="ssep" style="left:680px"></div><span class="st" style="left:743px">English (USA)</span><div class="ssep" style="left:943px"></div><div class="ssep" style="left:1067px"></div><svg class="ic" style="left:1082px;top:6px" width="36" height="28" viewBox="0 0 24 24"><rect x="2" y="8" width="12" height="9" fill="none" stroke="#2b86d4" stroke-width="1.5"/><path d="M18 4v18M15 4h6M15 22h6" stroke="#333" stroke-width="1.5"/></svg><div class="ssep" style="left:1123px"></div><svg class="ic" style="left:1140px;top:6px" width="30" height="28" viewBox="0 0 24 24"><rect x="4" y="4" width="16" height="16" fill="#fdd" stroke="#e04040" stroke-width="1.5"/><path d="M8 8l8 8M16 8l-8 8" stroke="#e04040" stroke-width="2"/></svg><div class="ssep" style="left:1175px"></div><span class="st" style="left:1296px">Average: ; Sum: 0</span><span class="st" style="left:1567px">&#x2212;</span><div class="zline"></div><div class="zknob"></div><span class="st" style="left:1782px">+</span><span class="st" style="left:1823px">100%</span></div>
<div class="lo-task"><span class="ws">Workspace 1</span><div class="calc-big"><svg width="92" height="113" viewBox="0 0 92 113"><path d="M9.5 4.25H51.5L87.75 40V102.5Q87.75 108.75 81.5 108.75H9.5Q3.25 108.75 3.25 102.5V10.5Q3.25 4.25 9.5 4.25Z" fill="#f6fbf6" stroke="#3a9a4a" stroke-width="6.5" stroke-linejoin="round"/><path d="M64 1H85Q91 1 91 7V27Z" fill="#3a9a4a"/><rect x="19.5" y="43.5" width="49" height="47" fill="#fff" stroke="#3a9a4a" stroke-width="3"/><rect x="21" y="45" width="46" height="6" fill="#8fd49a"/><path d="M19.5 53h49M19.5 62.5h49M19.5 72h49M19.5 81.5h49M35 43.5v47M52 43.5v47" stroke="#3a9a4a" stroke-width="2.6"/><rect x="49" y="69" width="24" height="24" fill="#fff" stroke="#3a9a4a" stroke-width="2.4"/><rect x="51" y="79" width="6" height="12" fill="#2f7fd0"/><rect x="58" y="72" width="6" height="19" fill="#e0404a"/><rect x="65" y="84" width="6" height="7" fill="#f39a2a"/></svg></div><span class="tt">Untitled 1 - LibreOffice Calc</span><svg class="ic" style="left:1281px;top:18px" width="64" height="82" viewBox="0 0 24 30"><path d="M2 1h14l6 6v22H2z" fill="#f4f4f4" stroke="#3f9a55" stroke-width="2"/><path d="M16 0l8 8V0z" fill="#3f9a55"/><path d="M6 14h12v10H6zM6 17h12M6 20h12M10 14v10M14 14v10" fill="none" stroke="#3f9a55" stroke-width="1"/></svg><svg class="ic" style="left:1364px;top:30px" width="78" height="62" viewBox="0 0 32 24"><rect x="1" y="1" width="30" height="22" fill="#333" stroke="#aaa" stroke-width="2"/><path d="M6 7l4 3-4 3M12 15h6" stroke="#fff" stroke-width="1.6" fill="none"/></svg><svg class="ic" style="left:1453px;top:22px" width="78" height="78" viewBox="0 0 24 24"><circle cx="12" cy="13" r="10" fill="#ff7a2a"/><circle cx="12" cy="13" r="6" fill="#7b3fe4"/><path d="M14 2c6 2 9 8 7 13" fill="none" stroke="#ffbf2a" stroke-width="3"/></svg><svg class="ic" style="left:1540px;top:18px" width="78" height="82" viewBox="0 0 24 24"><path d="M4 8l16-4 3 14-16 4z" fill="#fff" stroke="#888" stroke-width="1"/><path d="M6 10l12-3 2 9-12 3z" fill="#3a9ad4"/><ellipse cx="7" cy="20" rx="5" ry="3" fill="#f0c030"/></svg><svg class="ic" style="left:1639px;top:22px" width="58" height="78" viewBox="0 0 24 26"><path d="M2 2l20 22M22 2L2 24" stroke="#e01010" stroke-width="3"/><text x="3" y="16" font-size="9" fill="#fff" font-family="Liberation Sans">pdf</text></svg><svg class="ic" style="left:1719px;top:18px" width="78" height="82" viewBox="0 0 24 24"><path d="M3 4h12M3 4v18h16V12" fill="none" stroke="#555" stroke-width="2"/><path d="M10 16l11-11" stroke="#666" stroke-width="3"/></svg><svg class="ic" style="left:1808px;top:18px" width="78" height="82" viewBox="0 0 24 24"><rect x="2" y="1" width="20" height="22" rx="1" fill="#0a1530" stroke="#4a7ad0" stroke-width="1.5"/><rect x="5" y="4" width="14" height="4" fill="none" stroke="#4a7ad0" stroke-width="1"/><g fill="none" stroke="#4a7ad0" stroke-width="1"><rect x="5" y="11" width="3" height="2"/><rect x="9.5" y="11" width="3" height="2"/><rect x="14" y="11" width="3" height="2"/><rect x="5" y="15" width="3" height="2"/><rect x="9.5" y="15" width="3" height="2"/><rect x="14" y="15" width="3" height="2"/><rect x="5" y="19" width="3" height="2"/><rect x="9.5" y="19" width="3" height="2"/></g></svg></div>
</div>
    <div class="handle"><div class="hshadow"></div><div class="hbody">
      <div class="dots d1"></div><div class="dots d2"></div>
      <svg class="play" width="14" height="16" viewBox="0 0 14 16"><path d="M2 1.5Q1 1 1 2.5v11Q1 15 2 14.5l10-5.5q1.2-.8 0-1.6z" fill="#fff"/></svg>
    </div></div>
  </div>
  <div class="panel">
    <div class="deco"></div>
    <svg class="chev" width="20" height="28" viewBox="0 0 20 28"><path d="M4 3l10.5 11L4 25" fill="none" stroke="#808495" stroke-width="3.6"/></svg>
    <span class="deploy">Deploy</span>
    <div class="kebab"><i></i><i></i><i></i></div>

    <div class="av bot" style="top:130px"><svg width="40" height="40" viewBox="0 0 24 24"><path fill="#fff" d="M20 9V7c0-1.1-.9-2-2-2h-3c0-1.66-1.34-3-3-3S9 3.34 9 5H6c-1.1 0-2 .9-2 2v2c-1.66 0-3 1.34-3 3s1.34 3 3 3v4c0 1.1.9 2 2 2h12c1.1 0 2-.9 2-2v-4c1.66 0 3-1.34 3-3s-1.34-3-3-3zm-2 10H6V7h12v12zm-9-6c-.83 0-1.5-.67-1.5-1.5S8.17 10 9 10s1.5.67 1.5 1.5S9.83 13 9 13zm7.5-1.5c0 .83-.67 1.5-1.5 1.5s-1.5-.67-1.5-1.5.67-1.5 1.5-1.5 1.5.67 1.5 1.5zM8 15h8v2H8v-2z"/></svg></div>
    <div class="code"><div class="cl">Tool Use<span class="p">:</span> computer</div><div class="cl">Input<span class="p">:</span> <span class="p">{</span><span class="s">'action'</span><span class="p">:</span> <span class="s">'screenshot'</span><span class="p">}</span></div></div>

    <div class="av usr" style="top:380px">T</div>
    <div class="mini-wrap"><div class="mini-inner"><div class="lo mini">
<div class="lo-title"><span class="lo-tt">Untitled 1 - LibreOffice Calc</span><span class="lo-x">&#x2715;</span></div>
<div class="lo-menu">
<span class="mi" style="left:11px">File</span>
<span class="mi" style="left:69px">Edit</span>
<span class="mi" style="left:129px">View</span>
<span class="mi" style="left:200px">Insert</span>
<span class="mi" style="left:282px">Format</span>
<span class="mi" style="left:377px">Styles</span>
<span class="mi" style="left:461px">Sheet</span>
<span class="mi" style="left:543px">Data</span>
<span class="mi" style="left:614px">Tools</span>
<span class="mi" style="left:686px">Window</span>
<span class="mi" style="left:790px">Help</span>
<span class="mclose">&#x2715;</span>
</div>
<div class="lo-tb1">
<svg class="ic" style="left:14px;top:7px" width="30" height="34" viewBox="0 0 24 24"><path d="M3 1h12l6 6v16H3z" fill="#fff" stroke="#3f9a55" stroke-width="2"/><path d="M15 1l6 6h-6z" fill="#3f9a55"/><rect x="7" y="11" width="9" height="7" fill="#3f9a55"/><path d="M7 13.3h9M7 15.6h9M10 11v7M13 11v7" stroke="#fff" stroke-width=".8"/></svg><div class="dd" style="left:52px;top:22px"></div><svg class="ic" style="left:76px;top:7px" width="32" height="34" viewBox="0 0 24 24"><path d="M2 6h7l2 2h10v13H2z" fill="#f5c26b" stroke="#e9a040" stroke-width="1.2"/><path d="M2 11h19l-2 10H2z" fill="#fbd38a" stroke="#e9a040" stroke-width="1"/></svg><div class="dd" style="left:115px;top:22px"></div><svg class="ic" style="left:139px;top:7px" width="32" height="34" viewBox="0 0 24 24"><path d="M3 3h16l3 3v16H3z" fill="#c260c9" stroke="#a646ad" stroke-width="1"/><rect x="7" y="3" width="8" height="6" fill="#fff"/><rect x="7" y="14" width="9" height="8" fill="#fff"/><rect x="9.5" y="16" width="3" height="6" fill="#a646ad"/><circle cx="18" cy="5" r="4" fill="#f25a5a"/></svg><div class="dd" style="left:178px;top:22px"></div><div class="sep" style="left:202px;top:12px;height:26px"></div><svg class="ic" style="left:220px;top:7px" width="32" height="34" viewBox="0 0 24 24"><path d="M4 1h10l6 6v16H4z" fill="#fff" stroke="#333" stroke-width="1.5"/><path d="M14 1v6h6" fill="none" stroke="#333" stroke-width="1.3"/><path d="M10 22c3-6 6-9 10-8" stroke="#e04040" stroke-width="1.5" fill="none"/></svg><svg class="ic" style="left:260px;top:7px" width="32" height="34" viewBox="0 0 24 24"><rect x="6" y="2" width="12" height="6" fill="#fff" stroke="#444" stroke-width="2"/><rect x="2" y="8" width="20" height="9" rx="1" fill="#555"/><rect x="6" y="14" width="12" height="8" fill="#fff" stroke="#444" stroke-width="2"/></svg><svg class="ic" style="left:305px;top:7px" width="32" height="34" viewBox="0 0 24 24"><path d="M3 2h14v20H3z" fill="#fff" stroke="#444" stroke-width="1.5"/><circle cx="14" cy="16" r="4" fill="none" stroke="#2b86d4" stroke-width="2"/><path d="M17 19l4 4" stroke="#2b86d4" stroke-width="2"/></svg><div class="sep" style="left:348px;top:12px;height:26px"></div><svg class="ic" style="left:362px;top:7px" width="32" height="34" viewBox="0 0 24 24"><path d="M6 2l11 14M18 2L7 16" stroke="#333" stroke-width="1.5"/><circle cx="6" cy="19" r="3" fill="none" stroke="#2b86d4" stroke-width="2"/><circle cx="18" cy="19" r="3" fill="none" stroke="#2b86d4" stroke-width="2"/></svg><svg class="ic" style="left:404px;top:7px" width="32" height="34" viewBox="0 0 24 24"><path d="M3 2h9v15H3z" fill="#fff" stroke="#333" stroke-width="1.5"/><path d="M8 6h9l4 4v13H8z" fill="#fff" stroke="#333" stroke-width="1.5"/><path d="M11 14h7M11 18h7" stroke="#2b86d4" stroke-width="1.5"/></svg><svg class="ic" style="left:446px;top:7px" width="32" height="34" viewBox="0 0 24 24"><path d="M3 4h12v18H3z" fill="none" stroke="#c8c8c8" stroke-width="1.5"/><path d="M9 10h8l4 4v9H9z" fill="#eee" stroke="#c8c8c8" stroke-width="1.5"/></svg><div class="dd dis" style="left:490px;top:22px"></div><div class="sep" style="left:508px;top:12px;height:26px"></div><svg class="ic" style="left:524px;top:7px" width="32" height="34" viewBox="0 0 24 24"><rect x="10" y="1" width="4" height="9" rx="2" fill="none" stroke="#333" stroke-width="1.5"/><path d="M5 10h14v6H5z" fill="#fff" stroke="#333" stroke-width="1.5"/><path d="M5 16h14v6H5z" fill="#f8a840"/></svg><svg class="ic" style="left:566px;top:7px" width="32" height="34" viewBox="0 0 24 24"><path d="M3 21L12 2h1l3 12" fill="none" stroke="#333" stroke-width="1.6"/><path d="M7 14h6M2 22h9" stroke="#333" stroke-width="1.5"/><path d="M11 19l8-8 4 4-8 8z" fill="#e02828"/></svg><div class="sep" style="left:608px;top:12px;height:26px"></div><svg class="ic" style="left:622px;top:7px" width="32" height="34" viewBox="0 0 24 24"><path d="M5 17C9 9 15 3 22 7" fill="none" stroke="#2b86d4" stroke-width="1.8"/><path d="M4 9v9h9" fill="none" stroke="#2b86d4" stroke-width="1.8"/><path d="M22 7l-8 16" stroke="#2b86d4" stroke-width="1.6"/></svg><div class="dd" style="left:660px;top:22px"></div><svg class="ic" style="left:684px;top:7px" width="32" height="34" viewBox="0 0 24 24"><path d="M4 20C4 8 12 4 20 12" fill="none" stroke="#cfcfcf" stroke-width="1.8"/><path d="M21 5v8h-8" fill="none" stroke="#cfcfcf" stroke-width="1.8"/></svg><div class="dd dis" style="left:722px;top:22px"></div><div class="sep" style="left:744px;top:12px;height:26px"></div><svg class="ic" style="left:762px;top:7px" width="32" height="34" viewBox="0 0 24 24"><circle cx="10" cy="10" r="7" fill="none" stroke="#444" stroke-width="1.5"/><path d="M15 15l7 7" stroke="#444" stroke-width="2"/><path d="M5 21l5-6" stroke="#2b86d4" stroke-width="2"/></svg><svg class="ic" style="left:804px;top:7px" width="32" height="34" viewBox="0 0 24 24"><text x="3" y="11" font-size="10" font-family="Liberation Sans" fill="#333">ab</text><path d="M6 17l4 4 8-8" fill="none" stroke="#3f9a55" stroke-width="2"/></svg><div class="sep" style="left:846px;top:12px;height:26px"></div><svg class="ic" style="left:862px;top:7px" width="36" height="34" viewBox="0 0 24 24"><rect x="2" y="4" width="20" height="16" fill="#fff" stroke="#2b86d4" stroke-width="1.5"/><rect x="2" y="9" width="20" height="5" fill="#2b86d4"/><path d="M8 4v16M15 4v16" stroke="#2b86d4" stroke-width="1.5"/></svg><div class="dd" style="left:906px;top:22px"></div><svg class="ic" style="left:928px;top:7px" width="36" height="34" viewBox="0 0 24 24"><rect x="4" y="2" width="16" height="20" fill="#fff" stroke="#2b86d4" stroke-width="1.5"/><rect x="4" y="2" width="6" height="20" fill="#2b86d4"/><path d="M4 8h16M4 14h16" stroke="#2b86d4" stroke-width="1.5"/></svg><div class="dd" style="left:972px;top:22px"></div><div class="sep" style="left:994px;top:12px;height:26px"></div><svg class="ic" style="left:1010px;top:7px" width="32" height="34" viewBox="0 0 24 24"><rect x="2" y="3" width="20" height="18" fill="#fff" stroke="#444" stroke-width="1.5"/><text x="6" y="18" font-size="11" fill="#c060c0" font-family="Liberation Sans">Az</text></svg><svg class="ic" style="left:1050px;top:7px" width="32" height="34" viewBox="0 0 24 24"><text x="1" y="10" font-size="9" fill="#2b86d4" font-family="Liberation Sans">A</text><text x="1" y="21" font-size="9" fill="#c060c0" font-family="Liberation Sans">Z</text><path d="M16 2v19M12 17l4 4 4-4" fill="none" stroke="#333" stroke-width="1.5"/></svg><svg class="ic" style="left:1090px;top:7px" width="32" height="34" viewBox="0 0 24 24"><text x="1" y="10" font-size="9" fill="#c060c0" font-family="Liberation Sans">Z</text><text x="1" y="21" font-size="9" fill="#2b86d4" font-family="Liberation Sans">A</text><path d="M16 2v19M12 17l4 4 4-4" fill="none" stroke="#333" stroke-width="1.5"/></svg><svg class="ic" style="left:1132px;top:7px" width="32" height="34" viewBox="0 0 24 24"><path d="M2 3h20l-8 9v8l-4 2V12z" fill="#fff" stroke="#444" stroke-width="1.5"/><path d="M14 14l6 6" stroke="#f8a840" stroke-width="3"/></svg><div class="sep" style="left:1172px;top:12px;height:26px"></div><svg class="ic" style="left:1188px;top:7px" width="32" height="34" viewBox="0 0 24 24"><rect x="2" y="3" width="20" height="18" fill="#fff" stroke="#2b86d4" stroke-width="1.5"/><path d="M3 20l6-7 4 4 3-3 6 6z" fill="#2b86d4"/><circle cx="16" cy="8" r="2" fill="#f8a840"/></svg><svg class="ic" style="left:1228px;top:7px" width="32" height="34" viewBox="0 0 24 24"><rect x="3" y="10" width="4" height="12" fill="#2b86d4"/><rect x="10" y="4" width="4" height="18" fill="#f8a840"/><rect x="17" y="13" width="4" height="9" fill="#333"/></svg><svg class="ic" style="left:1268px;top:7px" width="32" height="34" viewBox="0 0 24 24"><rect x="2" y="2" width="20" height="20" fill="#fff" stroke="#2b86d4" stroke-width="1.5"/><path d="M6 6v14M12 6v14" stroke="#2b86d4" stroke-width="2"/><path d="M17 4v8" stroke="#444" stroke-width="2"/></svg><div class="sep" style="left:1310px;top:12px;height:26px"></div><svg class="ic" style="left:1326px;top:7px" width="32" height="34" viewBox="0 0 24 24"><path d="M12 3a9 9 0 1 0 .1 0" fill="none" stroke="#444" stroke-width="1.8"/></svg><div class="dd" style="left:1364px;top:22px"></div><svg class="ic" style="left:1386px;top:7px" width="32" height="34" viewBox="0 0 24 24"><circle cx="12" cy="12" r="9" fill="none" stroke="#444" stroke-width="1.5"/><path d="M3 12h18M12 3v18" stroke="#2b86d4" stroke-width="1.5"/></svg><svg class="ic" style="left:1426px;top:7px" width="32" height="34" viewBox="0 0 24 24"><path d="M2 3h20v14H9l-5 5v-5H2z" fill="#fff" stroke="#444" stroke-width="1.6"/></svg><svg class="ic" style="left:1466px;top:7px" width="32" height="34" viewBox="0 0 24 24"><path d="M4 2h11l5 5v15H4z" fill="#fff" stroke="#444" stroke-width="1.5"/><rect x="7" y="14" width="10" height="5" fill="#f8a840"/></svg><div class="sep" style="left:1506px;top:12px;height:26px"></div><svg class="ic" style="left:1522px;top:7px" width="32" height="34" viewBox="0 0 24 24"><rect x="2" y="3" width="20" height="18" fill="#fff" stroke="#444" stroke-width="1.5"/><path d="M2 9h20M9 3v18M15 3v18" stroke="#444" stroke-width="1.5"/></svg><svg class="ic" style="left:1562px;top:7px" width="32" height="34" viewBox="0 0 24 24"><rect x="2" y="3" width="20" height="18" fill="#fff" stroke="#2b86d4" stroke-width="1.5"/><rect x="2" y="3" width="8" height="18" fill="#2b86d4"/></svg><div class="dd" style="left:1600px;top:22px"></div><svg class="ic" style="left:1622px;top:7px" width="32" height="34" viewBox="0 0 24 24"><rect x="2" y="3" width="20" height="18" fill="#fff" stroke="#444" stroke-width="1.5"/><path d="M2 9h20" stroke="#444" stroke-width="3"/></svg><div class="sep" style="left:1662px;top:12px;height:26px"></div><svg class="ic" style="left:1678px;top:7px" width="32" height="34" viewBox="0 0 24 24"><path d="M3 10h12v12H3z" fill="#fff" stroke="#444" stroke-width="1.5"/><circle cx="15" cy="8" r="5" fill="#fff" stroke="#444" stroke-width="1.5"/></svg>
</div>
<div class="lo-tb2">
<div class="combo" style="left:9px;top:7px;width:323px;height:42px"><span class="ct">DejaVu Sans</span><div class="cbtn"></div></div><div class="combo" style="left:351px;top:7px;width:119px;height:42px"><span class="ct">10 pt</span><div class="cbtn"></div></div><div class="sep" style="left:480px;top:14px;height:28px"></div><span class="tb-b" style="left:497px">B</span><span class="tb-i" style="left:545px">I</span><span class="tb-u" style="left:580px">U</span><div class="dd" style="left:620px;top:25px"></div><div class="sep" style="left:640px;top:14px;height:28px"></div><svg class="ic" style="left:656px;top:8px" width="36" height="40" viewBox="0 0 24 24"><path d="M4 17L11 1h2l7 16M7 11h10" fill="none" stroke="#333" stroke-width="2"/><rect x="2" y="19" width="20" height="4" fill="#d42020"/></svg><div class="dd" style="left:700px;top:25px"></div><svg class="ic" style="left:720px;top:8px" width="36" height="40" viewBox="0 0 24 24"><path d="M6 4h10v10H6z" fill="#fff" stroke="#2b86d4" stroke-width="1.5"/><rect x="2" y="17" width="20" height="6" fill="#f0e040"/></svg><div class="dd" style="left:764px;top:25px"></div><div class="sep" style="left:786px;top:14px;height:28px"></div><svg class="ic" style="left:800px;top:10px" width="32" height="36" viewBox="0 0 24 24"><path d="M3 4h18M3 9h12M3 14h18M3 19h12" stroke="#333" stroke-width="2"/></svg><svg class="ic" style="left:842px;top:10px" width="32" height="36" viewBox="0 0 24 24"><path d="M3 4h18M6 9h12M3 14h18M6 19h12" stroke="#333" stroke-width="2"/></svg><svg class="ic" style="left:884px;top:10px" width="32" height="36" viewBox="0 0 24 24"><path d="M3 4h18M9 9h12M3 14h18M9 19h12" stroke="#333" stroke-width="2"/></svg><div class="sep" style="left:924px;top:14px;height:28px"></div><svg class="ic" style="left:938px;top:10px" width="32" height="36" viewBox="0 0 24 24"><path d="M3 3h18M12 7v14M8 11l4-4 4 4" fill="none" stroke="#2b86d4" stroke-width="1.8"/></svg><svg class="ic" style="left:980px;top:10px" width="32" height="36" viewBox="0 0 24 24"><path d="M3 12h18M12 2v6M12 16v6M9 5l3 3 3-3M9 19l3-3 3 3" fill="none" stroke="#333" stroke-width="1.8"/></svg><svg class="ic" style="left:1022px;top:10px" width="32" height="36" viewBox="0 0 24 24"><path d="M3 21h18M12 3v14M8 13l4 4 4-4" fill="none" stroke="#333" stroke-width="1.8"/></svg><div class="sep" style="left:1062px;top:14px;height:28px"></div><svg class="ic" style="left:1078px;top:10px" width="32" height="36" viewBox="0 0 24 24"><path d="M3 5h18M3 11h12M3 17h18" stroke="#2b86d4" stroke-width="1.8"/></svg><div class="sep" style="left:1116px;top:14px;height:28px"></div><svg class="ic" style="left:1130px;top:10px" width="32" height="36" viewBox="0 0 24 24"><rect x="3" y="3" width="18" height="18" fill="none" stroke="#bbb" stroke-width="1.5"/><path d="M3 9h18M3 15h18" stroke="#bbb" stroke-width="1.5"/></svg><svg class="ic" style="left:1172px;top:10px" width="32" height="36" viewBox="0 0 24 24"><rect x="3" y="3" width="18" height="18" fill="none" stroke="#bbb" stroke-width="1.5"/><path d="M3 12h18" stroke="#bbb" stroke-width="1.5"/></svg><svg class="ic" style="left:1214px;top:10px" width="32" height="36" viewBox="0 0 24 24"><rect x="3" y="3" width="18" height="18" fill="none" stroke="#bbb" stroke-width="1.5"/><path d="M12 3v18" stroke="#bbb" stroke-width="1.5"/></svg><div class="sep" style="left:1254px;top:14px;height:28px"></div><svg class="ic" style="left:1268px;top:10px" width="36" height="36" viewBox="0 0 24 24"><rect x="2" y="5" width="16" height="14" fill="#fff" stroke="#444" stroke-width="1.8"/><rect x="7" y="10" width="12" height="10" fill="#666"/></svg><div class="dd" style="left:1308px;top:25px"></div><span class="tb-t" style="left:1330px">%</span><span class="tb-t" style="left:1372px">0.0</span><svg class="ic" style="left:1420px;top:10px" width="32" height="36" viewBox="0 0 24 24"><rect x="2" y="4" width="20" height="18" fill="#fff" stroke="#444" stroke-width="1.5"/><path d="M2 9h20" stroke="#444" stroke-width="2"/><text x="8" y="20" font-size="10" fill="#333">7</text></svg><div class="sep" style="left:1460px;top:14px;height:28px"></div><span class="tb-t" style="left:1474px">.00</span><span class="tb-t red" style="left:1520px">.00</span><div class="sep" style="left:1568px;top:14px;height:28px"></div><svg class="ic" style="left:1582px;top:10px" width="32" height="36" viewBox="0 0 24 24"><path d="M10 4h11M10 9h11M10 14h11M10 19h11M2 8l4 4-4 4" fill="none" stroke="#2b86d4" stroke-width="1.8"/></svg><svg class="ic" style="left:1624px;top:10px" width="32" height="36" viewBox="0 0 24 24"><path d="M10 4h11M10 9h11M10 14h11M10 19h11M6 8l-4 4 4 4" fill="none" stroke="#2b86d4" stroke-width="1.8"/></svg><div class="sep" style="left:1666px;top:14px;height:28px"></div><svg class="ic" style="left:1680px;top:10px" width="32" height="36" viewBox="0 0 24 24"><rect x="2" y="2" width="20" height="20" fill="#fff" stroke="#333" stroke-width="1.8"/><path d="M12 2v20M2 12h20" stroke="#333" stroke-width="1.5"/></svg><div class="dd" style="left:1718px;top:25px"></div><svg class="ic" style="left:1740px;top:10px" width="36" height="36" viewBox="0 0 24 24"><path d="M2 4h20M2 9h20M2 14h20M2 20h20" stroke="#333" stroke-width="2.5"/></svg><div class="dd" style="left:1782px;top:25px"></div><span class="tb-t" style="left:1852px;font-size:28px">&#xBB;</span>
</div>
<div class="lo-fx">
<div class="combo" style="left:9px;top:5px;width:253px;height:43px"><span class="ct">A9</span><div class="cbtn"></div></div><div class="sep" style="left:272px;top:14px;height:26px"></div><span class="fxi" style="left:288px">f<span style="font-size:34px;margin-left:-2px">x</span></span><span class="sig" style="left:329px">&#x2211;</span><div class="dd" style="left:371px;top:24px"></div><span class="eq" style="left:394px">=</span><div class="fxin"></div><div class="fxdd"></div>
</div>
<div class="lo-colh">
<div class="ch sel" style="left:68.0px">A</div>
<div class="ch" style="left:220.2px">B</div>
<div class="ch" style="left:372.4px">C</div>
<div class="ch" style="left:524.6px">D</div>
<div class="ch" style="left:676.8px">E</div>
<div class="ch" style="left:829.0px">F</div>
<div class="ch" style="left:981.2px">G</div>
<div class="ch" style="left:1133.4px">H</div>
<div class="ch" style="left:1285.6px">I</div>
<div class="ch" style="left:1437.8px">J</div>
<div class="ch" style="left:1590.0px">K</div>
<div class="ch" style="left:1742.2px">L</div>
</div>
<div class="lo-grid">
<div class="rh" style="top:0.00px">1</div>
<div class="rh" style="top:31.55px">2</div>
<div class="rh" style="top:63.09px">3</div>
<div class="rh" style="top:94.64px">4</div>
<div class="rh" style="top:126.18px">5</div>
<div class="rh" style="top:157.73px">6</div>
<div class="rh" style="top:189.28px">7</div>
<div class="rh" style="top:220.82px">8</div>
<div class="rh sel" style="top:252.37px">9</div>
<div class="rh" style="top:283.91px">10</div>
<div class="rh" style="top:315.46px">11</div>
<div class="rh" style="top:347.01px">12</div>
<div class="rh" style="top:378.55px">13</div>
<div class="rh" style="top:410.10px">14</div>
<div class="rh" style="top:441.64px">15</div>
<div class="rh" style="top:473.19px">16</div>
<div class="rh" style="top:504.74px">17</div>
<div class="rh" style="top:536.28px">18</div>
<div class="rh" style="top:567.83px">19</div>
<div class="rh" style="top:599.37px">20</div>
<div class="rh" style="top:630.92px">21</div>
<div class="rh" style="top:662.47px">22</div>
<div class="rh" style="top:694.01px">23</div>
<div class="rh" style="top:725.56px">24</div>
<div class="rh" style="top:757.10px">25</div>
<div class="rh" style="top:788.65px">26</div>
<div class="rh" style="top:820.20px">27</div>
<div class="rh" style="top:851.74px">28</div>
<div class="rh last" style="top:883.29px">29</div>
<div class="hl" style="top:29.55px"></div>
<div class="hl" style="top:61.09px"></div>
<div class="hl" style="top:92.64px"></div>
<div class="hl" style="top:124.18px"></div>
<div class="hl" style="top:155.73px"></div>
<div class="hl" style="top:187.28px"></div>
<div class="hl" style="top:218.82px"></div>
<div class="hl" style="top:250.37px"></div>
<div class="hl" style="top:281.91px"></div>
<div class="hl" style="top:313.46px"></div>
<div class="hl" style="top:345.01px"></div>
<div class="hl" style="top:376.55px"></div>
<div class="hl" style="top:408.10px"></div>
<div class="hl" style="top:439.64px"></div>
<div class="hl" style="top:471.19px"></div>
<div class="hl" style="top:502.74px"></div>
<div class="hl" style="top:534.28px"></div>
<div class="hl" style="top:565.83px"></div>
<div class="hl" style="top:597.37px"></div>
<div class="hl" style="top:628.92px"></div>
<div class="hl" style="top:660.47px"></div>
<div class="hl" style="top:692.01px"></div>
<div class="hl" style="top:723.56px"></div>
<div class="hl" style="top:755.10px"></div>
<div class="hl" style="top:786.65px"></div>
<div class="hl" style="top:818.20px"></div>
<div class="hl" style="top:849.74px"></div>
<div class="hl" style="top:881.29px"></div>
<div class="hl" style="top:912.83px"></div>
<div class="vl" style="left:219.2px"></div>
<div class="vl" style="left:371.4px"></div>
<div class="vl" style="left:523.6px"></div>
<div class="vl" style="left:675.8px"></div>
<div class="vl" style="left:828.0px"></div>
<div class="vl" style="left:980.2px"></div>
<div class="vl" style="left:1132.4px"></div>
<div class="vl" style="left:1284.6px"></div>
<div class="vl" style="left:1436.8px"></div>
<div class="vl" style="left:1589.0px"></div>
<div class="vl" style="left:1741.2px"></div>
<div class="cv" style="top:63.09px">2</div>
<div class="cv" style="top:94.64px">3</div>
<div class="cv" style="top:126.18px">5</div>
<div class="cv" style="top:157.73px">7</div>
<div class="cv" style="top:220.82px">17</div>
<div class="cursel" style="top:251.37px"></div>
</div>
<div class="lo-vs"><div class="vs-btn1"></div><div class="vs-thumb"></div><div class="vs-btn2"></div></div><div class="lo-side"><div class="sb-menu"></div><svg class="ic" style="left:20px;top:59px" width="42" height="42" viewBox="0 0 24 24"><rect x="2" y="3" width="20" height="18" fill="#fff" stroke="#444" stroke-width="1.5"/><path d="M2 7h20" stroke="#444" stroke-width="2"/><path d="M6 13h12M14 10v6" stroke="#2b86d4" stroke-width="1.5"/></svg><svg class="ic" style="left:20px;top:115px" width="42" height="42" viewBox="0 0 24 24"><path d="M2 20L9 2h2l5 13M5 13h8" fill="none" stroke="#333" stroke-width="1.8"/><path d="M10 22l10-10 2 2-10 10z" fill="#2b86d4"/></svg><svg class="ic" style="left:20px;top:177px" width="42" height="42" viewBox="0 0 24 24"><path d="M1 5h8l2 3h11v14H1z" fill="#f5c26b"/><rect x="7" y="10" width="15" height="12" fill="#fff" stroke="#2b86d4" stroke-width="1.5"/><path d="M8 21l5-5 3 3 5-5v7z" fill="#2b86d4"/></svg><svg class="ic" style="left:20px;top:229px" width="42" height="42" viewBox="0 0 24 24"><circle cx="12" cy="12" r="10" fill="#fff" stroke="#2b86d4" stroke-width="2"/><path d="M16 8l-3 5-5 3 3-5z" fill="#2b86d4"/></svg><span class="sb-fx">f<span style="font-size:26px">x</span></span></div><div class="sb-handle"></div>
<div class="lo-hs"><div class="hs-btn"></div><div class="hs-thumb"></div></div>
<div class="lo-tabs"><svg class="ic" style="left:24px;top:4px" width="30" height="32" viewBox="0 0 24 26"><path d="M4 1v24" stroke="#888" stroke-width="2.4"/><path d="M20 1L7 13l13 12z" fill="#8a8a8a"/></svg><svg class="ic" style="left:60px;top:4px" width="30" height="32" viewBox="0 0 24 26"><path d="M19 1L5 13l14 12z" fill="#8a8a8a"/></svg><svg class="ic" style="left:98px;top:4px" width="30" height="32" viewBox="0 0 24 26"><path d="M5 1l14 12L5 25z" fill="#8a8a8a"/></svg><svg class="ic" style="left:134px;top:4px" width="30" height="32" viewBox="0 0 24 26"><path d="M20 1v24" stroke="#888" stroke-width="2.4"/><path d="M4 1l13 12L4 25z" fill="#8a8a8a"/></svg><div class="tab-plus"></div><div class="tab"><span>Sheet1</span></div></div>
<div class="lo-status"><span class="st" style="left:19px">Sheet 1 of 1</span><div class="ssep" style="left:240px"></div><div class="ssep" style="left:476px"></div><span class="st" style="left:492px">Default</span><div class="ssep" style="left:680px"></div><span class="st" style="left:743px">English (USA)</span><div class="ssep" style="left:943px"></div><div class="ssep" style="left:1067px"></div><svg class="ic" style="left:1082px;top:6px" width="36" height="28" viewBox="0 0 24 24"><rect x="2" y="8" width="12" height="9" fill="none" stroke="#2b86d4" stroke-width="1.5"/><path d="M18 4v18M15 4h6M15 22h6" stroke="#333" stroke-width="1.5"/></svg><div class="ssep" style="left:1123px"></div><svg class="ic" style="left:1140px;top:6px" width="30" height="28" viewBox="0 0 24 24"><rect x="4" y="4" width="16" height="16" fill="#fdd" stroke="#e04040" stroke-width="1.5"/><path d="M8 8l8 8M16 8l-8 8" stroke="#e04040" stroke-width="2"/></svg><div class="ssep" style="left:1175px"></div><span class="st" style="left:1296px">Average: ; Sum: 0</span><span class="st" style="left:1567px">&#x2212;</span><div class="zline"></div><div class="zknob"></div><span class="st" style="left:1782px">+</span><span class="st" style="left:1823px">100%</span></div>
<div class="lo-task"><span class="ws">Workspace 1</span><div class="calc-big"><svg width="92" height="113" viewBox="0 0 92 113"><path d="M9.5 4.25H51.5L87.75 40V102.5Q87.75 108.75 81.5 108.75H9.5Q3.25 108.75 3.25 102.5V10.5Q3.25 4.25 9.5 4.25Z" fill="#f6fbf6" stroke="#3a9a4a" stroke-width="6.5" stroke-linejoin="round"/><path d="M64 1H85Q91 1 91 7V27Z" fill="#3a9a4a"/><rect x="19.5" y="43.5" width="49" height="47" fill="#fff" stroke="#3a9a4a" stroke-width="3"/><rect x="21" y="45" width="46" height="6" fill="#8fd49a"/><path d="M19.5 53h49M19.5 62.5h49M19.5 72h49M19.5 81.5h49M35 43.5v47M52 43.5v47" stroke="#3a9a4a" stroke-width="2.6"/><rect x="49" y="69" width="24" height="24" fill="#fff" stroke="#3a9a4a" stroke-width="2.4"/><rect x="51" y="79" width="6" height="12" fill="#2f7fd0"/><rect x="58" y="72" width="6" height="19" fill="#e0404a"/><rect x="65" y="84" width="6" height="7" fill="#f39a2a"/></svg></div><span class="tt">Untitled 1 - LibreOffice Calc</span><svg class="ic" style="left:1281px;top:18px" width="64" height="82" viewBox="0 0 24 30"><path d="M2 1h14l6 6v22H2z" fill="#f4f4f4" stroke="#3f9a55" stroke-width="2"/><path d="M16 0l8 8V0z" fill="#3f9a55"/><path d="M6 14h12v10H6zM6 17h12M6 20h12M10 14v10M14 14v10" fill="none" stroke="#3f9a55" stroke-width="1"/></svg><svg class="ic" style="left:1364px;top:30px" width="78" height="62" viewBox="0 0 32 24"><rect x="1" y="1" width="30" height="22" fill="#333" stroke="#aaa" stroke-width="2"/><path d="M6 7l4 3-4 3M12 15h6" stroke="#fff" stroke-width="1.6" fill="none"/></svg><svg class="ic" style="left:1453px;top:22px" width="78" height="78" viewBox="0 0 24 24"><circle cx="12" cy="13" r="10" fill="#ff7a2a"/><circle cx="12" cy="13" r="6" fill="#7b3fe4"/><path d="M14 2c6 2 9 8 7 13" fill="none" stroke="#ffbf2a" stroke-width="3"/></svg><svg class="ic" style="left:1540px;top:18px" width="78" height="82" viewBox="0 0 24 24"><path d="M4 8l16-4 3 14-16 4z" fill="#fff" stroke="#888" stroke-width="1"/><path d="M6 10l12-3 2 9-12 3z" fill="#3a9ad4"/><ellipse cx="7" cy="20" rx="5" ry="3" fill="#f0c030"/></svg><svg class="ic" style="left:1639px;top:22px" width="58" height="78" viewBox="0 0 24 26"><path d="M2 2l20 22M22 2L2 24" stroke="#e01010" stroke-width="3"/><text x="3" y="16" font-size="9" fill="#fff" font-family="Liberation Sans">pdf</text></svg><svg class="ic" style="left:1719px;top:18px" width="78" height="82" viewBox="0 0 24 24"><path d="M3 4h12M3 4v18h16V12" fill="none" stroke="#555" stroke-width="2"/><path d="M10 16l11-11" stroke="#666" stroke-width="3"/></svg><svg class="ic" style="left:1808px;top:18px" width="78" height="82" viewBox="0 0 24 24"><rect x="2" y="1" width="20" height="22" rx="1" fill="#0a1530" stroke="#4a7ad0" stroke-width="1.5"/><rect x="5" y="4" width="14" height="4" fill="none" stroke="#4a7ad0" stroke-width="1"/><g fill="none" stroke="#4a7ad0" stroke-width="1"><rect x="5" y="11" width="3" height="2"/><rect x="9.5" y="11" width="3" height="2"/><rect x="14" y="11" width="3" height="2"/><rect x="5" y="15" width="3" height="2"/><rect x="9.5" y="15" width="3" height="2"/><rect x="14" y="15" width="3" height="2"/><rect x="5" y="19" width="3" height="2"/><rect x="9.5" y="19" width="3" height="2"/></g></svg></div>
</div>
      <svg class="ibeam" width="12" height="30" viewBox="0 0 12 30"><path d="M2 2h8M6 2v26M2 28h8" stroke="#222" stroke-width="2.5" fill="none"/></svg>
    </div></div>

    <div class="av bot" style="top:948px"><svg width="40" height="40" viewBox="0 0 24 24"><path fill="#fff" d="M20 9V7c0-1.1-.9-2-2-2h-3c0-1.66-1.34-3-3-3S9 3.34 9 5H6c-1.1 0-2 .9-2 2v2c-1.66 0-3 1.34-3 3s1.34 3 3 3v4c0 1.1.9 2 2 2h12c1.1 0 2-.9 2-2v-4c1.66 0 3-1.34 3-3s-1.34-3-3-3zm-2 10H6V7h12v12zm-9-6c-.83 0-1.5-.67-1.5-1.5S8.17 10 9 10s1.5.67 1.5 1.5S9.83 13 9 13zm7.5-1.5c0 .83-.67 1.5-1.5 1.5s-1.5-.67-1.5-1.5.67-1.5 1.5-1.5 1.5.67 1.5 1.5zM8 15h8v2H8v-2z"/></svg></div>
    <div class="msg">
      <p class="m1">計算結果が表示されました。<span class="a">10</span>以下の素数<br>の合計は<span class="a">17</span>になりました。</p>
      <p class="m2">整理すると：</p>
      <div class="li" style="top:1167.5px"><span class="num a">1.</span><span class="lt">入力した素数<span class="a">: 2, 3, 5, 7</span></span></div>
      <div class="li" style="top:1224.5px"><span class="num a">2.</span><span class="lt">合計<span class="a">: 17</span></span></div>
      <p class="m3">これで要望の作業は完了しました。他に何<br>かお手伝いできることはありますか？</p>
    </div>

    <div class="chat"><div class="ph">Type a message to send to Claude to control the<br>computer</div>
      <svg class="send" width="42" height="38" viewBox="1 1 23 22" preserveAspectRatio="none"><path d="M2.01 21L23 12 2.01 3 2 10l13 2-13 2z" fill="#9ea3b3"/></svg>
    </div>
  </div>
</div>

</body></html>
